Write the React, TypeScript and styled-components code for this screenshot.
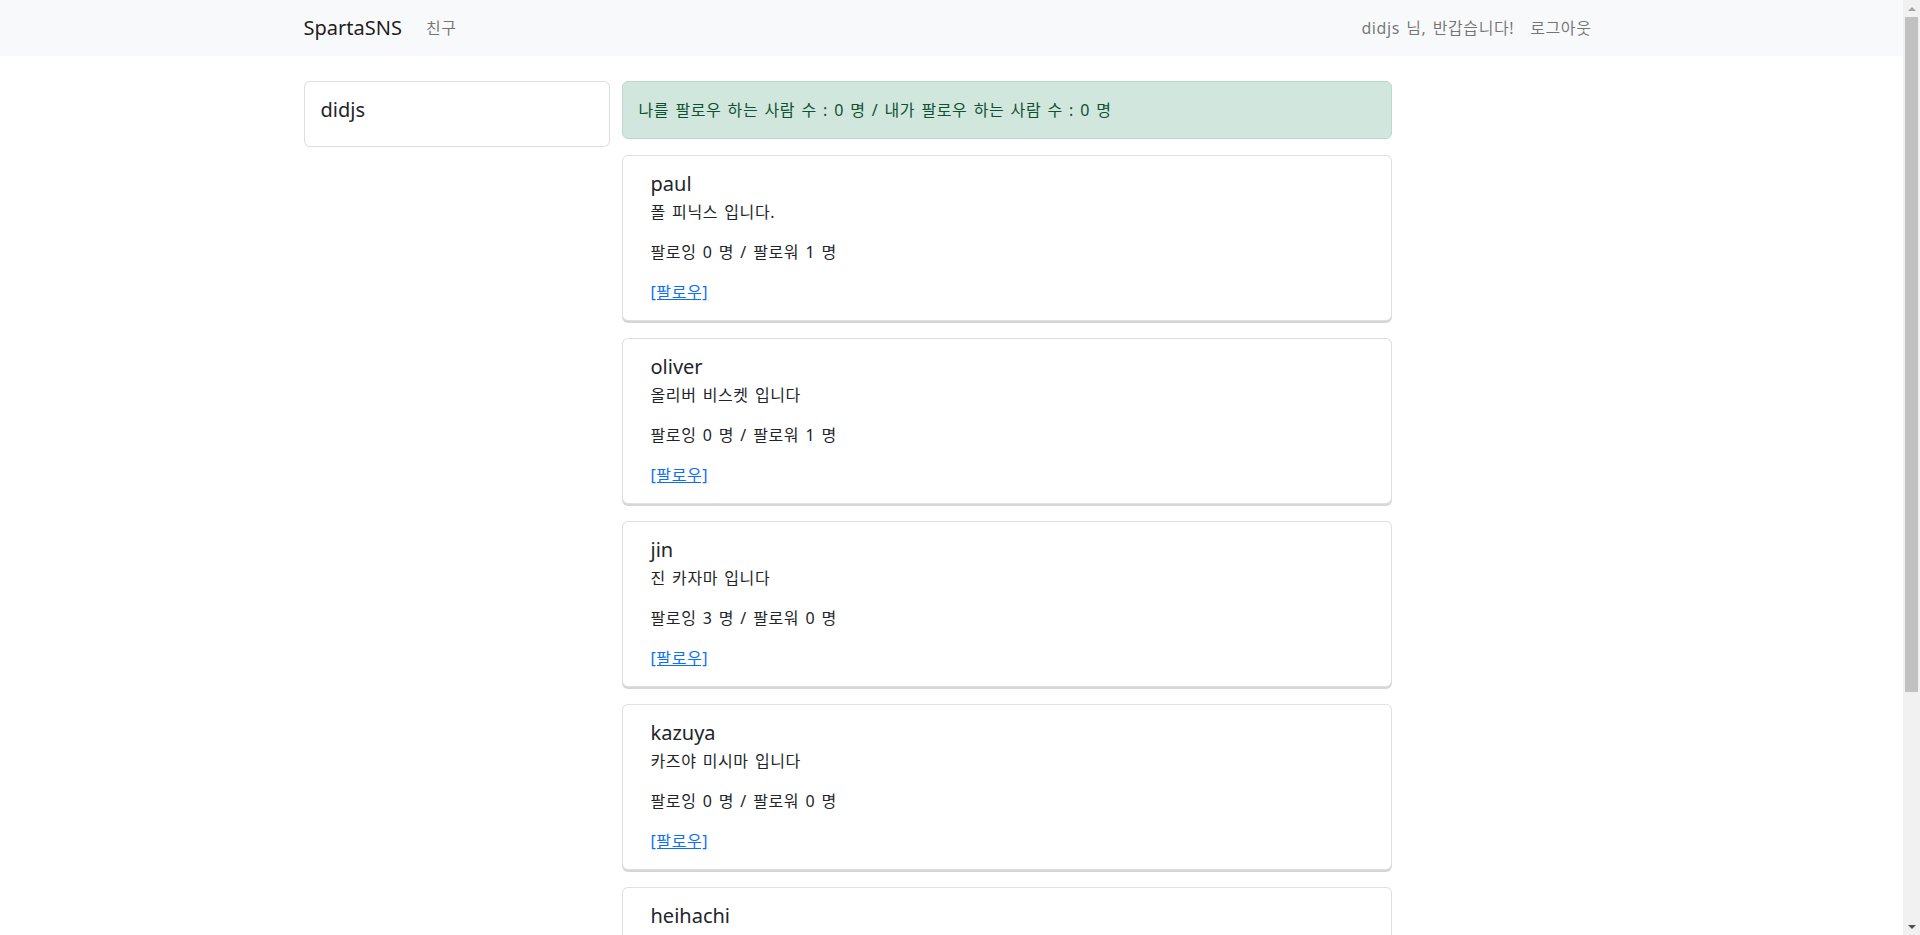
import React from "react";
import styled, { createGlobalStyle } from "styled-components";

const scrollbarWidth = 17;

const GlobalStyle = createGlobalStyle`
    html, body {
        margin: 0;
        padding: 0;
    }
    body {
        font-family: "Noto Sans", "Noto Sans CJK KR", sans-serif;
        font-size: 16px;
        line-height: 1.5;
        color: #212529;
        background: #fff;
        padding-right: ${scrollbarWidth}px;
    }
    * {
        box-sizing: border-box;
    }
`;

/* korean text in the reference runs a little wider than Noto CJK */
const koSpacing = `
    letter-spacing: 0.6px;
    word-spacing: 1.5px;
`;

const Navbar = styled.nav`
    background: #f8f9fa;
    height: 56px;
`;

const Container = styled.div`
    width: 1296px;
    margin: 0 auto;
`;

const NavInner = styled(Container)`
    height: 100%;
    display: flex;
    align-items: center;
    justify-content: space-between;
`;

const NavGroup = styled.div`
    display: flex;
    align-items: center;
`;

const Brand = styled.a`
    font-size: 20px;
    line-height: 30px;
    color: rgba(0, 0, 0, 0.9);
    text-decoration: none;
    margin-right: 16px;
`;

const NavLink = styled.a`
    ${koSpacing}
    padding: 8px;
    color: rgba(0, 0, 0, 0.55);
    text-decoration: none;
    cursor: pointer;
`;

const Main = styled(Container)`
    margin-top: 25px;
    display: flex;
    align-items: flex-start;
`;

const Side = styled.aside`
    width: 306px;
    margin-right: 12px;
`;

const Feed = styled.section`
    width: 770px;
`;

const Card = styled.div`
    background: #fff;
    border: 1px solid rgba(0, 0, 0, 0.125);
    border-radius: 6px;
`;

const ProfileBody = styled.div`
    padding: 16px;
`;

const ProfileName = styled.h5`
    margin: 0 0 8px;
    font-size: 20px;
    font-weight: 400;
    line-height: 1.2;
`;

const Alert = styled.div`
    ${koSpacing}
    background: #d1e7dd;
    border: 1px solid #badbcc;
    color: #0f5132;
    border-radius: 6px;
    padding: 16px;
    margin-bottom: 16px;
`;

const UserCard = styled(Card)`
    margin-bottom: 17px;
    box-shadow: 0 2px 0 rgba(0, 0, 0, 0.16);
`;

const UserBody = styled.div`
    padding: 16px 28px;
`;

const UserName = styled.h5`
    margin: 0 0 4px;
    font-size: 20px;
    font-weight: 400;
    line-height: 1.2;
`;

const Text = styled.p<{ $last?: boolean }>`
    ${koSpacing}
    margin: 0 0 ${(p) => (p.$last ? "0" : "16px")};
`;

const FollowLink = styled.a`
    color: #0d6efd;
    text-decoration: underline;
    cursor: pointer;
`;

// the window's scrollbar, drawn since the headless browser hides it
const ScrollTrack = styled.div`
    position: fixed;
    top: 0;
    right: 0;
    width: ${scrollbarWidth}px;
    height: 100vh;
    background: #f1f1f1;
    display: flex;
    flex-direction: column;
    align-items: center;
`;

const ScrollButton = styled.div<{ $down?: boolean }>`
    height: 17px;
    width: 100%;
    display: flex;
    align-items: center;
    justify-content: center;
    margin-top: ${(p) => (p.$down ? "auto" : "0")};
    &::after {
        content: "";
        border-left: 4px solid transparent;
        border-right: 4px solid transparent;
        ${(p) =>
            p.$down
                ? "border-top: 4px solid #505050;"
                : "border-bottom: 4px solid #a3a3a3;"}
    }
`;

const ScrollThumb = styled.div`
    width: 13px;
    background: #c1c1c1;
`;

type User = {
    name: string;
    intro: string;
    following: number;
    follower: number;
};

const users: User[] = [
    { name: "paul", intro: "폴 피닉스 입니다.", following: 0, follower: 1 },
    { name: "oliver", intro: "올리버 비스켓 입니다", following: 0, follower: 1 },
    { name: "jin", intro: "진 카자마 입니다", following: 3, follower: 0 },
    { name: "kazuya", intro: "카즈야 미시마 입니다", following: 0, follower: 0 },
    { name: "heihachi", intro: "헤이하치 미시마 입니다", following: 0, follower: 0 },
    { name: "lars", intro: "라스 알렉산더슨 입니다", following: 0, follower: 0 },
];

const App = () => {
    const items = users.map((user) => (
        <UserCard key={user.name}>
            <UserBody>
                <UserName>{user.name}</UserName>
                <Text>{user.intro}</Text>
                <Text>
                    팔로잉 {user.following} 명 / 팔로워 {user.follower} 명
                </Text>
                <Text $last>
                    <FollowLink>[팔로우]</FollowLink>
                </Text>
            </UserBody>
        </UserCard>
    ));

    return (
        <>
            <GlobalStyle />
            <Navbar>
                <NavInner>
                    <NavGroup>
                        <Brand>SpartaSNS</Brand>
                        <NavLink>친구</NavLink>
                    </NavGroup>
                    <NavGroup>
                        <NavLink>didjs 님, 반갑습니다!</NavLink>
                        <NavLink>로그아웃</NavLink>
                    </NavGroup>
                </NavInner>
            </Navbar>
            <Main>
                <Side>
                    <Card>
                        <ProfileBody>
                            <ProfileName>didjs</ProfileName>
                        </ProfileBody>
                    </Card>
                </Side>
                <Feed>
                    <Alert>
                        나를 팔로우 하는 사람 수 : 0 명 / 내가 팔로우 하는 사람 수 : 0 명
                    </Alert>
                    {items}
                </Feed>
            </Main>
            <ScrollTrack>
                <ScrollButton />
                <ScrollThumb style={{ height: 675 }} />
                <ScrollButton $down />
            </ScrollTrack>
        </>
    );
};

export default App;
